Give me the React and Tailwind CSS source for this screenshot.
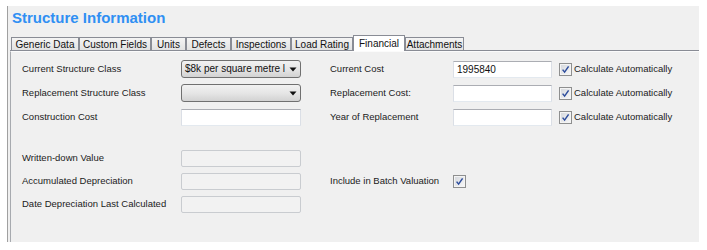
import React from "react";

const font = "font-['Liberation_Sans',Arial,sans-serif]";

function Check() {
  return (
    <div className="w-[13px] h-[13px] border border-[#8e8f8f] bg-[#f4f4f4] p-[1px] shrink-0">
      <div className="w-full h-full bg-gradient-to-br from-[#d6d9de] to-[#f6f6f6] flex items-center justify-center">
        <svg width="9" height="9" viewBox="0 0 9 9">
          <path d="M1.6 4.6 L3.6 7.1 L7.6 1.4" stroke="#2c4c9c" strokeWidth="1.5" fill="none" />
        </svg>
      </div>
    </div>
  );
}

function TextBox({ value = "", w = "w-[120px]" }) {
  return (
    <div className={`${w} h-[17px] bg-white border border-[#abadb3] border-l-[#dbdfe6] border-r-[#dbdfe6] border-b-[#e3e9ef] flex items-center pl-[3px] text-[10px] text-[#111]`}>
      {value}
    </div>
  );
}

function Disabled() {
  return <div className="w-[120px] h-[17px] bg-[#f2f2f2] border border-[#c9ccd0] rounded-[2px]" />;
}

function Combo({ text }) {
  return (
    <div className="w-[120px] h-[18px] rounded-[3px] border border-[#707070] bg-gradient-to-b from-[#f2f2f2] via-[#e6e6e6] to-[#d2d2d2] flex items-center">
      <div className="w-[104px] pl-[3px] whitespace-nowrap text-[10px] text-[#111] leading-none">
        {text}
      </div>
      <div className="flex-1 flex items-center justify-center">
        <svg width="8" height="5" viewBox="0 0 8 5">
          <path d="M0.5 0.5 L7.5 0.5 L4 4.5 Z" fill="#111" />
        </svg>
      </div>
    </div>
  );
}

function Label({ children, w }) {
  return <div className={`${w} text-[9.5px] text-[#1b1b1b] whitespace-nowrap`}>{children}</div>;
}

const tabs = [
  ["Generic Data", "w-[68px]"],
  ["Custom Fields", "w-[72px]"],
  ["Units", "w-[35px]"],
  ["Defects", "w-[45px]"],
  ["Inspections", "w-[60px]"],
  ["Load Rating", "w-[62px]"],
  ["Financial", "w-[52px]", true],
  ["Attachments", "w-[59px]"],
];

function AutoCheck() {
  return (
    <div className="flex items-center ml-[7px]">
      <Check />
      <span className="ml-[2px] text-[9.5px] text-[#1b1b1b] whitespace-nowrap">Calculate Automatically</span>
    </div>
  );
}

export default function App() {
  return (
    <div className={`${font} w-[707px] h-[250px] bg-white pt-[6px] pl-[7px]`}>
      <div className="w-[692px] h-[236px] bg-[#f0f0f0] border-l border-[#a0a0a0] flex flex-col overflow-hidden">
        <div className="mt-[3px] pl-[4px] h-[18px] leading-[18px] text-[15px] font-bold text-[#2f8ff3]">
          Structure Information
        </div>
        <div className="mt-[8px] h-[16px] flex items-end pl-[2px]">
          <div className="w-[1px] h-full border-b border-[#898c95]" />
          {tabs.map(([t, w, sel]) =>
            sel ? (
              <div
                key={t}
                className={`${w} h-[16px] bg-white border-t border-l border-r border-[#898c95] flex items-center justify-center text-[10px] text-[#111] pb-[1px]`}
              >
                {t}
              </div>
            ) : (
              <div
                key={t}
                className={`${w} h-[14px] bg-gradient-to-b from-[#f4f4f4] to-[#e2e2e2] border border-[#898c95] flex items-center justify-center text-[10px] text-[#111]`}
              >
                {t}
              </div>
            )
          )}
          <div className="flex-1 h-full border-b border-[#898c95]" />
        </div>
        <div className="flex-1 ml-[2px] border-l border-[#a7aaaf] border-t border-t-[#fbfbfb] pt-[5px] pl-[11px] flex flex-col">
          <div className="h-[24px] flex items-center">
            <Label w="w-[159px]">Current Structure Class</Label>
            <Combo text="$8k per square metre l" />
            <div className="w-[29px]" />
            <Label w="w-[123px]">Current Cost</Label>
            <TextBox w="w-[99px]" value="1995840" />
            <AutoCheck />
          </div>
          <div className="h-[24px] flex items-center">
            <Label w="w-[159px]">Replacement Structure Class</Label>
            <Combo text="" />
            <div className="w-[29px]" />
            <Label w="w-[123px]">Replacement Cost:</Label>
            <TextBox w="w-[99px]" />
            <AutoCheck />
          </div>
          <div className="h-[24px] flex items-center">
            <Label w="w-[159px]">Construction Cost</Label>
            <TextBox />
            <div className="w-[29px]" />
            <Label w="w-[123px]">Year of Replacement</Label>
            <TextBox w="w-[99px]" />
            <AutoCheck />
          </div>
          <div className="h-[18px]" />
          <div className="h-[23px] flex items-center">
            <Label w="w-[159px]">Written-down Value</Label>
            <Disabled />
          </div>
          <div className="h-[23px] flex items-center">
            <Label w="w-[159px]">Accumulated Depreciation</Label>
            <Disabled />
            <div className="w-[29px]" />
            <Label w="w-[123px]">Include in Batch Valuation</Label>
            <Check />
          </div>
          <div className="h-[23px] flex items-center">
            <Label w="w-[159px]">Date Depreciation Last Calculated</Label>
            <Disabled />
          </div>
        </div>
      </div>
    </div>
  );
}
